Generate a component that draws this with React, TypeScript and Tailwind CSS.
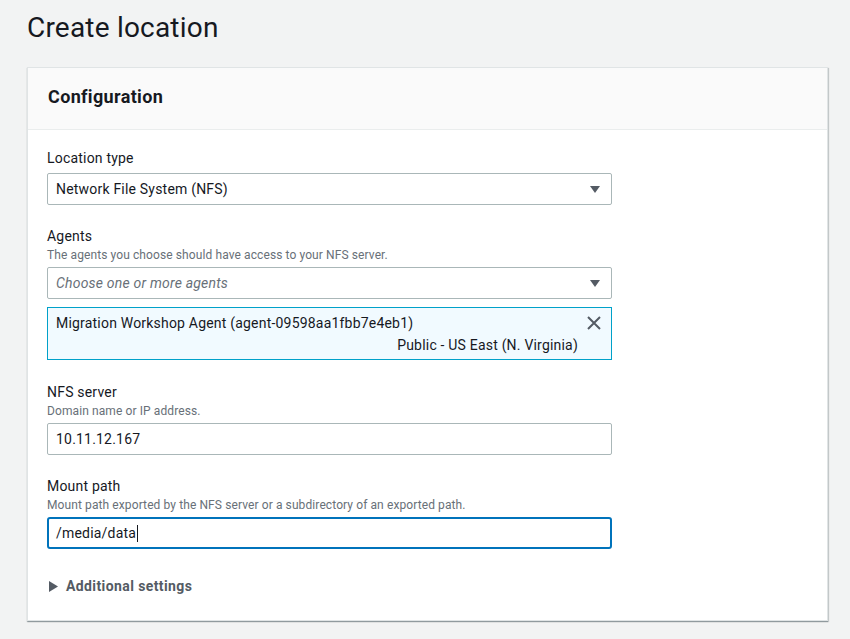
export default function App() {
  return (
    <div
      className="min-h-screen bg-[#f2f3f3] px-[27px] pb-4 text-[#16191f] tracking-[0.2px]"
      style={{ fontFamily: "Roboto, 'Liberation Sans', sans-serif" }}
    >
      {/* TITLE */}
      <h1 className="pt-[10px] text-[28px] leading-[36px] font-normal">Create location</h1>

      {/* CARD */}
      <div className="mt-[21px] w-[801px] bg-white border border-[#e0e4e5] shadow-[0_1px_1px_0_rgba(0,28,36,0.3),1px_1px_1px_0_rgba(0,28,36,0.15)]">
        <div className="bg-[#fafafa] border-b border-[#eaeded] px-5 pt-[17px] pb-[20px]">
          <h2 className="text-[18px] leading-[24px] font-bold tracking-[0.35px]">Configuration</h2>
        </div>

        <div className="pl-[19px] pt-[17px] pb-[23px]">
          {/* LOCATION TYPE */}
          <Label>Location type</Label>
          <Select value="Network File System (NFS)" className="mt-1" />

          {/* AGENTS */}
          <div className="mt-5">
            <Label>Agents</Label>
            <Desc>The agents you choose should have access to your NFS server.</Desc>
            <Select value="Choose one or more agents" placeholder className="mt-1" />

            <div className="relative mt-2 w-[565px] bg-[#f1faff] border border-[#00a1c9] pl-2 pr-[33px] pt-[4px] pb-[3px] text-sm leading-[22px]">
              <div>Migration Workshop Agent (agent-09598aa1fbb7e4eb1)</div>
              <div className="text-right">Public - US East (N. Virginia)</div>
              <svg
                className="absolute right-[10px] top-[8px]"
                width="14"
                height="14"
                viewBox="0 0 14 14"
                fill="none"
                stroke="#545b64"
                strokeWidth="2"
              >
                <path d="M1 1 L13 13 M13 1 L1 13" />
              </svg>
            </div>
          </div>

          {/* NFS SERVER */}
          <div className="mt-[21px]">
            <Label>NFS server</Label>
            <Desc>Domain name or IP address.</Desc>
            <div className="mt-1 w-[565px] h-[32px] flex items-center border border-[#aab7b8] rounded-[2px] pl-2 text-sm">
              10.11.12.167
            </div>
          </div>

          {/* MOUNT PATH */}
          <div className="mt-5">
            <Label>Mount path</Label>
            <Desc>Mount path exported by the NFS server or a subdirectory of an exported path.</Desc>
            <div className="mt-1 w-[565px] h-[32px] flex items-center border-2 border-[#0073bb] rounded-[3px] pl-[7px] text-sm">
              /media/data
              <span className="ml-[1px] inline-block w-px h-[17px] bg-[#16191f]" />
            </div>
          </div>

          {/* ADDITIONAL SETTINGS */}
          <div className="mt-[26px] flex items-center gap-2 pl-[2px] text-sm leading-[22px] font-bold text-[#545b64] tracking-[0.4px]">
            <svg width="9" height="11" viewBox="0 0 9 11" fill="#545b64">
              <path d="M0 0 L9 5.5 L0 11 Z" />
            </svg>
            <span>Additional settings</span>
          </div>
        </div>
      </div>
    </div>
  );
}

function Label({ children }: { children: React.ReactNode }) {
  return <div className="text-sm leading-[22px]">{children}</div>;
}

function Desc({ children }: { children: React.ReactNode }) {
  return <div className="text-xs leading-4 text-[#687078] tracking-[0.1px]">{children}</div>;
}

function Select({
  value,
  placeholder,
  className,
}: {
  value: string;
  placeholder?: boolean;
  className?: string;
}) {
  return (
    <div
      className={
        "w-[565px] h-[32px] flex items-center justify-between border border-[#aab7b8] rounded-[2px] pl-2 pr-[11px] text-sm " +
        (className ?? "")
      }
    >
      <span className={placeholder ? "italic text-[#687078]" : ""}>{value}</span>
      <svg width="10" height="7" viewBox="0 0 10 7" fill="#545b64">
        <path d="M0 0 L10 0 L5 7 Z" />
      </svg>
    </div>
  );
}
